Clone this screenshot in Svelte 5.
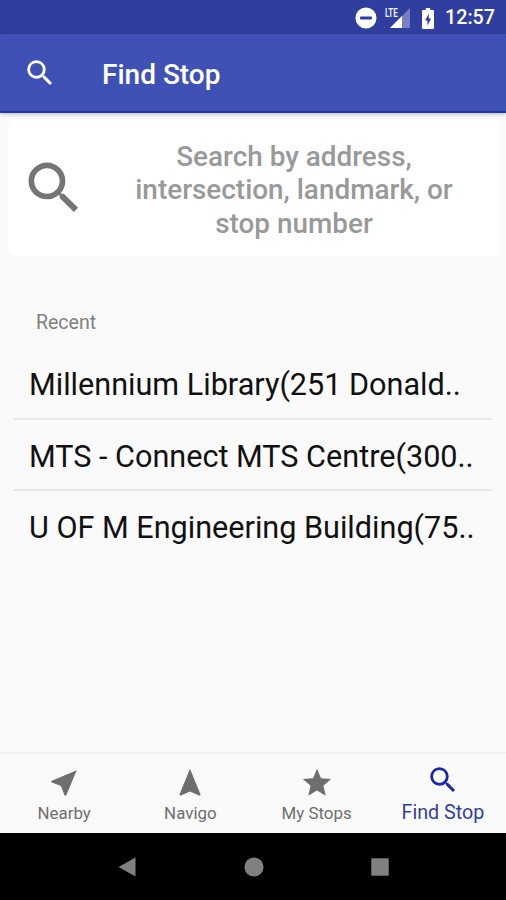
<script lang="ts">
  const searchPath =
    'M15.5 14h-.79l-.28-.27A6.47 6.47 0 0 0 16 9.5 6.5 6.5 0 1 0 9.5 16c1.61 0 3.09-.59 4.23-1.57l.27.28v.79l5 4.99L20.49 19l-4.99-5zm-6 0C7.01 14 5 11.99 5 9.5S7.01 5 9.5 5 14 7.01 14 9.5 11.99 14 9.5 14z';

  const recentStops = [
    'Millennium Library(251 Donald..',
    'MTS - Connect MTS Centre(300..',
    'U OF M Engineering Building(75..',
  ];

  const tabs = [
    { label: 'Nearby', icon: 'M21 3L3 10.53v.98l6.84 2.65L12.48 21h.98L21 3z' },
    { label: 'Navigo', icon: 'M12 2L4.5 20.29l.71.71L12 18l6.79 3 .71-.71z' },
    {
      label: 'My Stops',
      icon: 'M12 17.27L18.18 21l-1.64-7.03L22 9.24l-7.19-.61L12 2 9.19 8.63 2 9.24l5.46 4.73L5.82 21z',
    },
    { label: 'Find Stop', icon: searchPath },
  ];

  let activeTab = $state('Find Stop');
</script>

<div class="screen">
  <div class="status-bar">
    <svg class="dnd" viewBox="0 0 22 22">
      <circle cx="11" cy="11" r="10.5" fill="#fff" />
      <rect x="5" y="9.6" width="12" height="2.8" rx="1" fill="#303f9f" />
    </svg>
    <div class="signal">
      <span class="lte">LTE</span>
      <svg viewBox="0 0 20 20">
        <path d="M20 0v20H0z" fill="#7780c0" />
        <path d="M12 8v12H0z" fill="#fff" />
      </svg>
    </div>
    <svg class="battery" viewBox="0 0 12 21">
      <path d="M3.8 0h4.4v2H11a1 1 0 0 1 1 1v17a1 1 0 0 1-1 1H1a1 1 0 0 1-1-1V3a1 1 0 0 1 1-1h2.8z" fill="#fff" />
      <path d="M6.8 5.8L3 12.4h2.4v5L9.2 10.6H6.8z" fill="#303f9f" />
    </svg>
    <span class="clock">12:57</span>
  </div>

  <header class="toolbar">
    <svg class="icon" viewBox="0 0 24 24"><path d={searchPath} /></svg>
    <h1>Find Stop</h1>
  </header>

  <main>
    <button class="search-card">
      <svg viewBox="0 0 24 24"><path d={searchPath} /></svg>
      <span>Search by address,<br />intersection, landmark, or<br />stop number</span>
    </button>

    <h2>Recent</h2>
    <ul>
      {#each recentStops as stop}
        <li>{stop}</li>
      {/each}
    </ul>
  </main>

  <nav class="tabs">
    {#each tabs as tab}
      <button class:active={activeTab === tab.label} onclick={() => (activeTab = tab.label)}>
        <svg class="icon" viewBox="0 0 24 24"><path d={tab.icon} /></svg>
        <span>{tab.label}</span>
      </button>
    {/each}
  </nav>

  <div class="system-nav">
    <svg viewBox="0 0 20 20"><path d="M18.5 .5v19L1.5 10z" /></svg>
    <svg viewBox="0 0 20 20"><circle cx="10" cy="10" r="9.6" /></svg>
    <svg viewBox="0 0 20 20"><rect x="1.3" y="1.3" width="17.4" height="17.4" /></svg>
  </div>
</div>

<style>
  :global(body) {
    margin: 0;
  }

  .screen {
    display: flex;
    flex-direction: column;
    width: 506px;
    height: 900px;
    overflow: hidden;
    background: #fafafa;
    font-family: Roboto, 'Liberation Sans', sans-serif;
  }

  button {
    border: none;
    padding: 0;
    font: inherit;
    cursor: pointer;
  }

  svg {
    display: block;
    flex: none;
  }

  .icon {
    width: 34px;
    height: 34px;
    fill: currentColor;
  }

  .status-bar {
    display: flex;
    align-items: center;
    justify-content: flex-end;
    height: 34px;
    box-sizing: border-box;
    padding: 2px 11px 0 0;
    background: #303f9f;
    color: #fff;
  }

  .dnd {
    width: 22px;
    height: 22px;
  }

  .signal {
    display: flex;
    align-items: flex-start;
    margin-left: 8px;
    height: 22px;
  }

  .signal svg {
    width: 20px;
    height: 20px;
    margin: 1px 0 0 -9px;
  }

  .lte {
    width: 14px;
    font-size: 13px;
    line-height: 11px;
    font-weight: 500;
    transform: scaleX(0.62);
    transform-origin: left;
  }

  .battery {
    width: 12px;
    height: 21px;
    margin-left: 12px;
  }

  .clock {
    margin-left: 11px;
    font-size: 19.7px;
    font-weight: 500;
    line-height: 34px;
  }

  .toolbar {
    display: flex;
    align-items: center;
    height: 79px;
    box-sizing: border-box;
    padding: 1px 0 0 23px;
    background: #3f51b5;
    color: #fff;
    border-bottom: 2px solid #1c3ba5;
    box-shadow: 0 1px 4px rgba(0, 0, 0, 0.28);
    z-index: 1;
  }

  .toolbar h1 {
    margin: 3px 0 0 45px;
    font-size: 28px;
    font-weight: 500;
  }

  main {
    flex: 1;
    padding: 6px 6px 0 8px;
  }

  .search-card {
    display: flex;
    align-items: center;
    width: 492px;
    height: 137px;
    padding-left: 12px;
    border-radius: 7px;
    background: #fff;
    color: #999;
    font-size: 27.9px;
    font-weight: 500;
    line-height: 33.3px;
    text-align: center;
  }

  .search-card svg {
    width: 68px;
    height: 68px;
    fill: #757575;
  }

  .search-card span {
    flex: 1;
    padding: 5px 0 0;
  }

  h2 {
    margin: 55px 0 0 28px;
    font-size: 19.5px;
    font-weight: 400;
    line-height: 24px;
    color: #808080;
  }

  ul {
    margin: 13px 8px 0 6px;
    padding: 0;
    list-style: none;
  }

  li {
    height: 71.5px;
    box-sizing: border-box;
    padding-left: 15px;
    border-bottom: 2px solid #e6e6e6;
    font-size: 30.6px;
    line-height: 74px;
    white-space: nowrap;
    color: #111;
  }

  li:last-child {
    border-bottom: none;
  }

  .tabs {
    display: grid;
    grid-template-columns: repeat(4, 1fr);
    height: 81px;
    box-sizing: border-box;
    padding-left: 1px;
    border-top: 2px solid #f0f0f0;
    background: #fafafa;
  }

  .tabs button {
    display: flex;
    flex-direction: column;
    align-items: center;
    padding-top: 12px;
    background: none;
    color: #6e6e6e;
    font-size: 16.9px;
    line-height: 24px;
  }

  .tabs span {
    margin-top: 1px;
  }

  .tabs .active {
    padding-top: 9px;
    color: #303f9f;
    font-size: 19.7px;
  }

  .tabs .active span {
    margin-top: 4px;
  }

  .tabs .active .icon {
    fill: #1a27a6;
  }

  .system-nav {
    display: flex;
    align-items: center;
    justify-content: center;
    gap: 106.5px;
    height: 67px;
    box-sizing: border-box;
    padding-left: 1px;
    background: #000;
  }

  .system-nav svg {
    width: 20px;
    height: 20px;
    fill: #808080;
  }
</style>
